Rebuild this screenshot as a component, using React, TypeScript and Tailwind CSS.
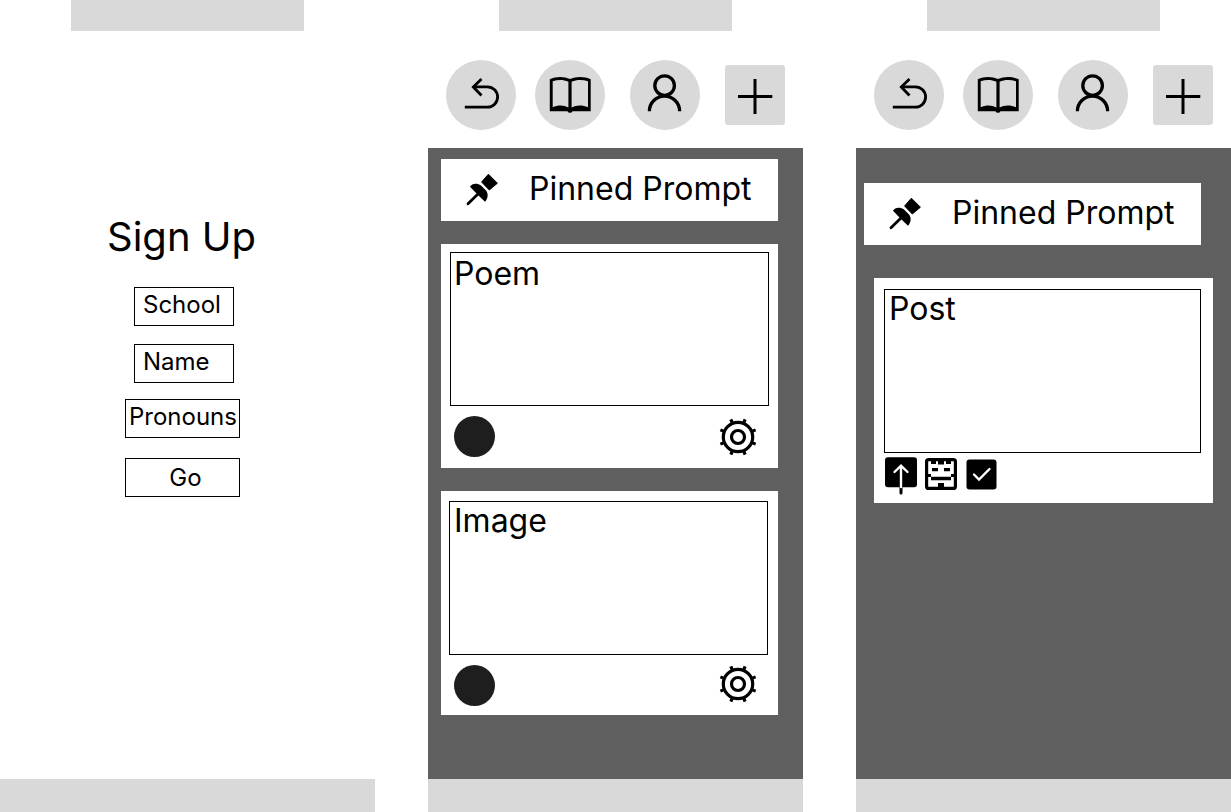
import type { ReactNode } from "react";

function UndoIcon() {
  return (
    <svg viewBox="0 0 70 70" className="size-full" fill="none" stroke="black" strokeWidth="2.8" aria-hidden="true">
      <path d="M18.8 47.2H41.4A10.2 10.2 0 0 0 41.4 26.8H27" />
      <path d="M35.5 19L27.3 27L35.5 35.4" />
    </svg>
  );
}

function BookIcon() {
  return (
    <svg viewBox="0 0 70 70" className="size-full" fill="black" fillRule="evenodd" aria-hidden="true">
      <path d="M14.8 19.3C21 16.2 29 16.2 35 19.1C41 16.2 49.5 16.2 55.7 19.3V51.3H37.5Q37 52.8 35 52.8Q33 52.8 32.5 51.3H14.8ZM17.7 21.3C23 19.4 28.5 19.4 33.4 21.8V47.6C29 44.8 23 44.8 17.7 47.2ZM36.6 21.8C41.5 19.4 47.5 19.4 53 21.3V47.2C47.5 44.8 41 44.8 36.6 47.6Z" />
    </svg>
  );
}

function PersonIcon() {
  return (
    <svg viewBox="0 0 70 70" className="size-full" fill="none" stroke="black" strokeWidth="3.3" aria-hidden="true">
      <circle cx="34.6" cy="25.6" r="9.8" />
      <path d="M19.4 51.2A15.1 15.1 0 0 1 49.6 51.2" />
    </svg>
  );
}

function PlusIcon() {
  return (
    <svg viewBox="0 0 60 60" className="size-full" fill="none" stroke="black" strokeWidth="3" aria-hidden="true">
      <path d="M13 31.5H47.3M30 14V49" />
    </svg>
  );
}

function PinIcon() {
  return (
    <svg viewBox="0 0 31 31" className="size-[31px] shrink-0 overflow-visible" aria-hidden="true">
      <path d="M21.4 0.2L30.4 9.2L22.3 16L14.6 8Z" stroke="black" strokeWidth="1" strokeLinejoin="round" />
      <path d="M3 12.7C5 8.8 10.5 8.9 14 11.5L19 16.5C21.6 20 21 24.5 18 27.7L12 22L9 19Z" />
      <path d="M1 29.7L12 19" stroke="black" strokeWidth="2.8" strokeLinecap="round" />
    </svg>
  );
}

const teeth = [22, 68, 112, 158, 202, 248, 292, 338];

function GearIcon() {
  return (
    <svg viewBox="-19 -19 38 38" className="size-[38px]" fill="none" stroke="black" strokeWidth="3.2" aria-hidden="true">
      <circle r="14.7" />
      <circle r="6.5" />
      {teeth.map((angle) => (
        <path key={angle} d="M15 0H19" transform={`rotate(${angle})`} />
      ))}
    </svg>
  );
}

function UploadIcon() {
  return (
    <svg viewBox="0 0 32 38" className="h-[38px] w-8" fill="none" strokeLinecap="round" aria-hidden="true">
      <rect y="0.3" width="32" height="30" rx="3" fill="black" />
      <path d="M16 30V36" stroke="black" strokeWidth="3" />
      <path d="M16 9V30M9.5 15L16 8.7L22.5 15" stroke="white" strokeWidth="2.4" />
    </svg>
  );
}

function FaceIcon() {
  return (
    <svg viewBox="0 0 32 32" className="size-8" aria-hidden="true">
      <rect x="1.6" y="1.6" width="28.8" height="28.8" rx="2" fill="white" stroke="black" strokeWidth="3.2" />
      <path d="M6 3h5v3h-5zM13 3h6v3.5h-6zM21 3h5v3h-5zM7 10h6v3.3h-6zM19 10h6v3.3h-6zM3 16h3v3h-3zM26 16h3v3h-3zM6 18.7h20v3.5h-20zM13 25h6v5h-6z" />
    </svg>
  );
}

function CheckIcon() {
  return (
    <svg viewBox="0 0 31 31" className="size-[31px]" fill="none" strokeLinecap="round" aria-hidden="true">
      <rect x="0.5" y="0.5" width="30" height="30" rx="3" fill="black" />
      <path d="M8 15.5L13 20.5L23.5 10" stroke="white" strokeWidth="2.4" />
    </svg>
  );
}

function Screen({ children }: { children: ReactNode }) {
  return (
    <section className="flex min-w-0 flex-col bg-white">
      <div className="h-[31px] w-[233px] max-w-full self-center bg-[#d9d9d9]" />
      {children}
      <div className="h-[33px] bg-[#d9d9d9]" />
    </section>
  );
}

function Toolbar() {
  return (
    <nav className="flex items-center pt-[29px] pb-[18px] pl-[18px]">
      <button aria-label="Back" className="size-[70px] shrink-0 rounded-full bg-[#d9d9d9]">
        <UndoIcon />
      </button>
      <button aria-label="Library" className="ml-[19px] size-[70px] shrink-0 rounded-full bg-[#d9d9d9]">
        <BookIcon />
      </button>
      <button aria-label="Profile" className="ml-[25px] size-[70px] shrink-0 rounded-full bg-[#d9d9d9]">
        <PersonIcon />
      </button>
      <button aria-label="New post" className="ml-[25px] size-[60px] shrink-0 rounded-[3px] bg-[#d9d9d9]">
        <PlusIcon />
      </button>
    </nav>
  );
}

function PinnedPrompt() {
  return (
    <div className="flex h-[62px] items-center gap-[31px] bg-white pb-[2px] pl-[26px]">
      <PinIcon />
      <h2 className="text-[32px] leading-[40px] whitespace-nowrap">Pinned Prompt</h2>
    </div>
  );
}

function Field({ label, className }: { label: string; className: string }) {
  return (
    <input
      type="text"
      aria-label={label}
      placeholder={label}
      className={`h-[39px] rounded-none border border-black bg-white pb-1 text-2xl placeholder:text-black ${className}`}
    />
  );
}

export default function App() {
  return (
    <main className="grid min-h-screen grid-cols-3 gap-[53px] bg-white font-['Inter',sans-serif] text-black">
      <Screen>
        <form className="flex flex-1 flex-col pt-[182px] pl-[125px]" onSubmit={(e) => e.preventDefault()}>
          <h1 className="-ml-[18px] text-[40px] leading-[48px]">Sign Up</h1>
          <Field label="School" className="mt-[26px] ml-[9px] w-[100px] pl-2" />
          <Field label="Name" className="mt-[18px] ml-[9px] w-[100px] pl-2" />
          <Field label="Pronouns" className="mt-4 w-[115px] pl-[3px]" />
          <button type="submit" className="mt-5 h-[39px] w-[115px] border border-black pl-[6px] text-2xl">
            Go
          </button>
        </form>
      </Screen>

      <Screen>
        <Toolbar />
        <div className="flex flex-1 flex-col gap-[23px] bg-[#5f5f5f] pt-[11px] pr-[25px] pl-[13px]">
          <PinnedPrompt />
          <article className="h-[224px] bg-white px-[9px] pt-2">
            <div className="h-[154px] border border-black pl-[3px]">
              <h3 className="text-[32px] leading-[42px]">Poem</h3>
            </div>
            <div className="mt-[10px] flex items-center justify-between pr-3 pl-1">
              <span className="size-[41px] rounded-full bg-[#1e1e1e]" />
              <button aria-label="Poem settings">
                <GearIcon />
              </button>
            </div>
          </article>
          <article className="h-[224px] bg-white pt-[10px] pr-[10px] pl-2">
            <div className="h-[154px] border border-black pl-1">
              <h3 className="text-[32px] leading-[38px]">Image</h3>
            </div>
            <div className="mt-[10px] flex items-start justify-between pr-[11px] pl-[5px]">
              <span className="size-[41px] rounded-full bg-[#1e1e1e]" />
              <button aria-label="Image settings">
                <GearIcon />
              </button>
            </div>
          </article>
        </div>
      </Screen>

      <Screen>
        <Toolbar />
        <div className="flex flex-1 flex-col gap-[33px] bg-[#5f5f5f] pt-[35px] pr-[18px] pl-2">
          <div className="mr-3">
            <PinnedPrompt />
          </div>
          <article className="ml-[10px] h-[225px] bg-white pt-[11px] pr-3 pl-[10px]">
            <div className="h-[164px] border border-black pl-1">
              <h3 className="text-[32px] leading-[38px]">Post</h3>
            </div>
            <div className="mt-1 flex items-start gap-2 pl-px">
              <button aria-label="Share">
                <UploadIcon />
              </button>
              <button aria-label="React" className="mt-px">
                <FaceIcon />
              </button>
              <button aria-label="Mark done" className="mt-[2px] ml-px">
                <CheckIcon />
              </button>
            </div>
          </article>
        </div>
      </Screen>
    </main>
  );
}
